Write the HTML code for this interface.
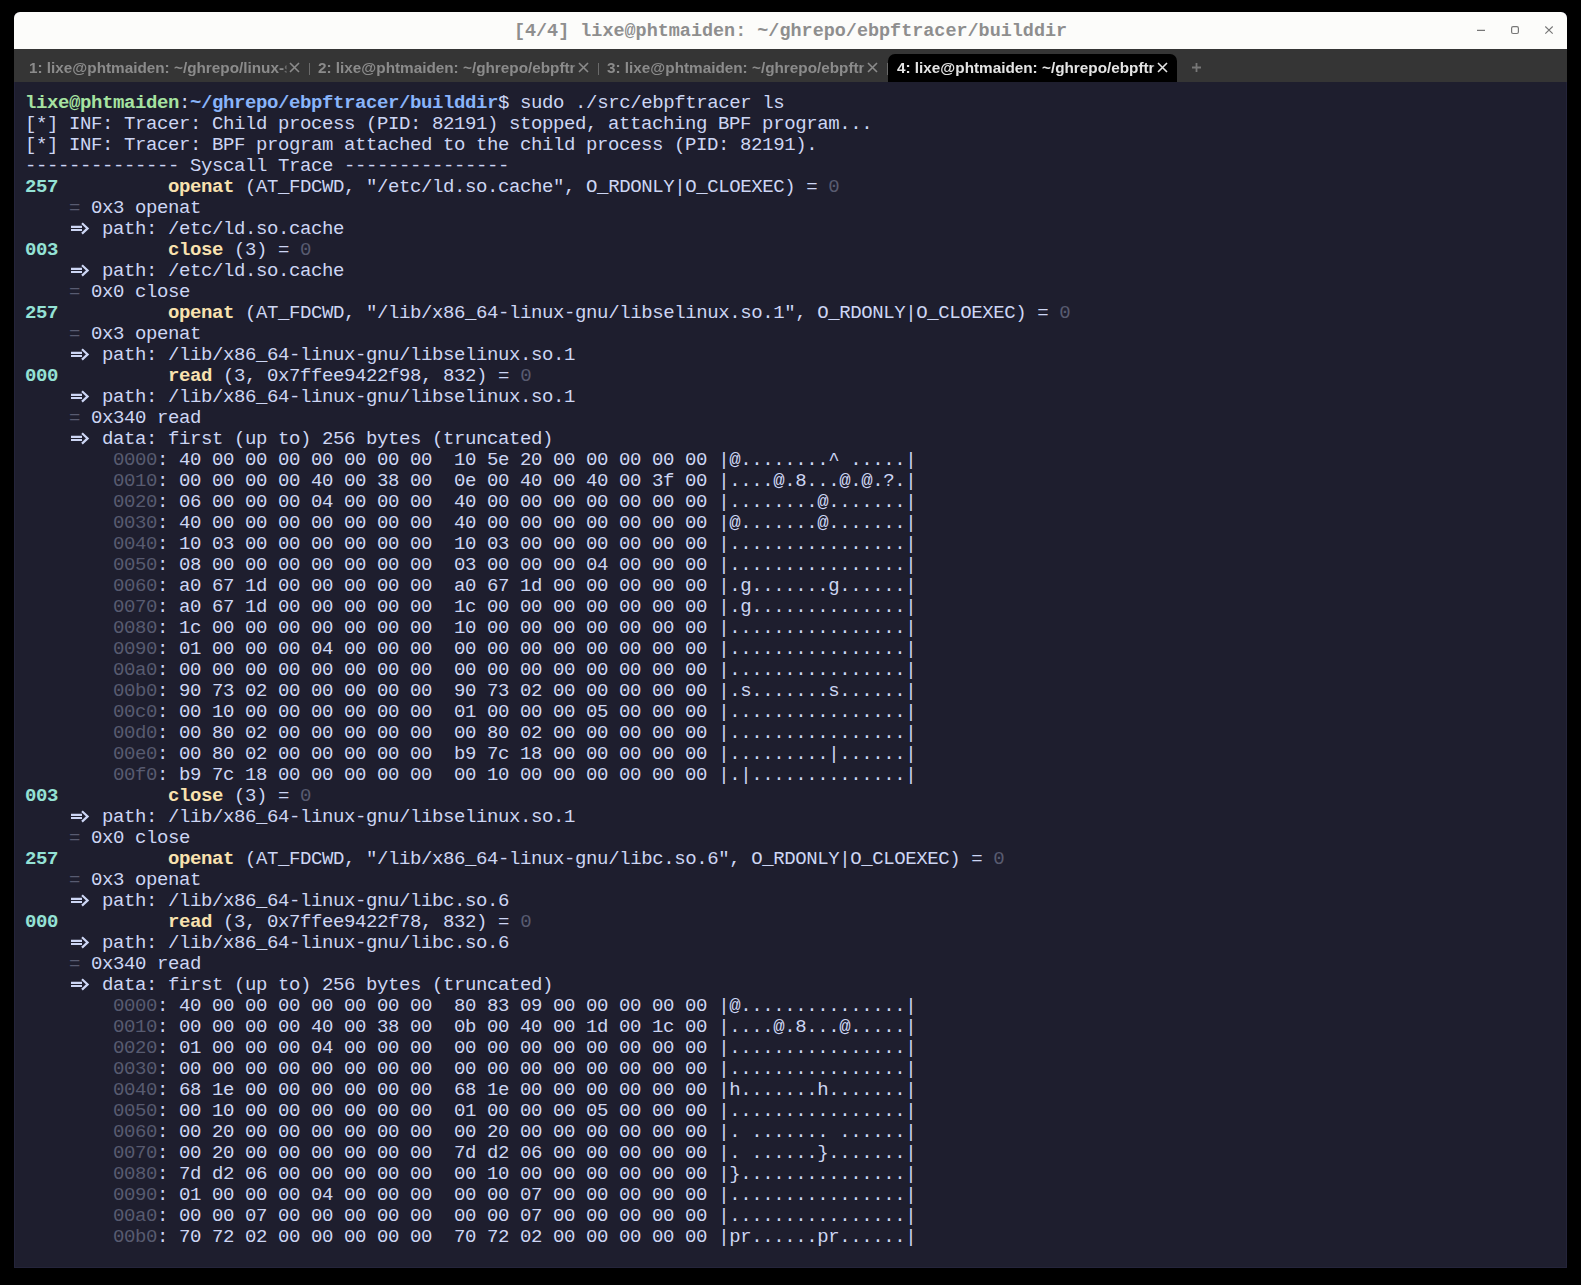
<!DOCTYPE html>
<html><head><meta charset="utf-8">
<style>
html,body{margin:0;padding:0;background:#000;width:1581px;height:1285px;overflow:hidden}
#win{position:absolute;left:14px;top:12px;width:1553px;height:1256px;background:#1e1e2e;border-radius:6px 6px 0 0;overflow:hidden;box-shadow:inset 1px -1px 0 #24243a,inset -1px 0 0 #24243a}
#title{position:absolute;left:0;top:0;width:1553px;height:37px;background:#fcfcfa}
#ttext{position:absolute;left:0;top:1px;width:1553px;height:37px;line-height:37px;text-align:center;font-family:"Liberation Mono",monospace;font-weight:bold;font-size:18.45px;color:#8e8e8e}
#tabs{position:absolute;left:0;top:37px;width:1553px;height:33px;background:#353535}
.tab{position:absolute;top:5px;height:28px;width:289px;font-family:"Liberation Sans",sans-serif;font-size:15.3px;font-weight:bold;color:#8b8b8b;overflow:hidden}
.tab .tt{position:absolute;left:9px;top:5px;white-space:nowrap;width:258px;overflow:hidden;-webkit-mask-image:linear-gradient(to right,#000 255px,transparent 259px)}
.tab svg{position:absolute;left:269px;top:8px}
.tab.act{background:#000;color:#e4e4e4;border-radius:7px 7px 0 0}
.sep{position:absolute;top:14px;width:1px;height:12px;background:#6a6a6a}
#term{position:absolute;left:11px;top:81px;font-family:"Liberation Mono",monospace;font-size:19px;letter-spacing:-0.4px;color:#cdd6f4}
.l{white-space:pre;height:21px;line-height:21px}
.pg{color:#a6e3a1;font-weight:bold}
.pb{color:#89b4fa;font-weight:bold}
.nt{color:#94e2d5;font-weight:bold}
.sy{color:#f9e2af;font-weight:bold}
.dm{color:#585b70}
.ar{display:inline-block;width:22px;height:21px;vertical-align:top;font-style:normal}
.ar svg{display:block}
</style></head><body>
<div id="win">
 <div id="title"><div id="ttext">[4/4] lixe@phtmaiden: ~/ghrepo/ebpftracer/builddir</div>
  <svg style="position:absolute;left:1460px;top:10px" width="93" height="17" viewBox="0 0 93 17">
   <path d="M3 8.4H11" stroke="#777" stroke-width="1.1"/>
   <rect x="37.6" y="4.7" width="6.8" height="6.8" rx="1.5" fill="none" stroke="#777" stroke-width="1.2"/>
   <path d="M71.3 4.5L78.7 11.7M78.7 4.5L71.3 11.7" stroke="#777" stroke-width="1.1"/>
  </svg>
 </div>
 <div id="tabs">
  <div class="tab" style="left:6px"><div class="tt">1: lixe@phtmaiden: ~/ghrepo/linux-sched</div><svg width="11" height="11" viewBox="0 0 11 11"><path d="M1 1L10 10M10 1L1 10" stroke="#8b8b8b" stroke-width="1.6"/></svg></div>
  <div class="sep" style="left:295px"></div>
  <div class="tab" style="left:295px"><div class="tt">2: lixe@phtmaiden: ~/ghrepo/ebpftracer</div><svg width="11" height="11" viewBox="0 0 11 11"><path d="M1 1L10 10M10 1L1 10" stroke="#8b8b8b" stroke-width="1.6"/></svg></div>
  <div class="sep" style="left:584px"></div>
  <div class="tab" style="left:584px"><div class="tt">3: lixe@phtmaiden: ~/ghrepo/ebpftracer</div><svg width="11" height="11" viewBox="0 0 11 11"><path d="M1 1L10 10M10 1L1 10" stroke="#8b8b8b" stroke-width="1.6"/></svg></div>
  <div class="sep" style="left:873px"></div>
  <div class="tab act" style="left:874px"><div class="tt">4: lixe@phtmaiden: ~/ghrepo/ebpftracer</div><svg width="11" height="11" viewBox="0 0 11 11"><path d="M1 1L10 10M10 1L1 10" stroke="#e4e4e4" stroke-width="1.6"/></svg></div>
  <svg style="position:absolute;left:1177px;top:13px" width="11" height="11" viewBox="0 0 11 11"><path d="M1 5.5H10M5.5 1V10" stroke="#777" stroke-width="1.8"/></svg>
 </div>
 <div id="term">
<div class="l"><span class="pg">lixe@phtmaiden</span>:<span class="pb">~/ghrepo/ebpftracer/builddir</span>$ sudo ./src/ebpftracer ls</div>
<div class="l">[*] INF: Tracer: Child process (PID: 82191) stopped, attaching BPF program...</div>
<div class="l">[*] INF: Tracer: BPF program attached to the child process (PID: 82191).</div>
<div class="l">-------------- Syscall Trace ---------------</div>
<div class="l"><span class="nt">257</span>          <span class="sy">openat</span> (AT_FDCWD, "/etc/ld.so.cache", O_RDONLY|O_CLOEXEC) = <span class="dm">0</span></div>
<div class="l">    <span class="dm">=</span> 0x3 openat</div>
<div class="l">    <i class="ar"><svg width="22" height="21" viewBox="0 0 22 21"><path d="M2 7.85H13M2 11H13" stroke="#cdd6f4" stroke-width="2.1" fill="none"/><path d="M13 4.2L18.6 9.4L13 14.6" stroke="#cdd6f4" stroke-width="2.2" fill="none" stroke-linejoin="miter"/></svg></i> path: /etc/ld.so.cache</div>
<div class="l"><span class="nt">003</span>          <span class="sy">close</span> (3) = <span class="dm">0</span></div>
<div class="l">    <i class="ar"><svg width="22" height="21" viewBox="0 0 22 21"><path d="M2 7.85H13M2 11H13" stroke="#cdd6f4" stroke-width="2.1" fill="none"/><path d="M13 4.2L18.6 9.4L13 14.6" stroke="#cdd6f4" stroke-width="2.2" fill="none" stroke-linejoin="miter"/></svg></i> path: /etc/ld.so.cache</div>
<div class="l">    <span class="dm">=</span> 0x0 close</div>
<div class="l"><span class="nt">257</span>          <span class="sy">openat</span> (AT_FDCWD, "/lib/x86_64-linux-gnu/libselinux.so.1", O_RDONLY|O_CLOEXEC) = <span class="dm">0</span></div>
<div class="l">    <span class="dm">=</span> 0x3 openat</div>
<div class="l">    <i class="ar"><svg width="22" height="21" viewBox="0 0 22 21"><path d="M2 7.85H13M2 11H13" stroke="#cdd6f4" stroke-width="2.1" fill="none"/><path d="M13 4.2L18.6 9.4L13 14.6" stroke="#cdd6f4" stroke-width="2.2" fill="none" stroke-linejoin="miter"/></svg></i> path: /lib/x86_64-linux-gnu/libselinux.so.1</div>
<div class="l"><span class="nt">000</span>          <span class="sy">read</span> (3, 0x7ffee9422f98, 832) = <span class="dm">0</span></div>
<div class="l">    <i class="ar"><svg width="22" height="21" viewBox="0 0 22 21"><path d="M2 7.85H13M2 11H13" stroke="#cdd6f4" stroke-width="2.1" fill="none"/><path d="M13 4.2L18.6 9.4L13 14.6" stroke="#cdd6f4" stroke-width="2.2" fill="none" stroke-linejoin="miter"/></svg></i> path: /lib/x86_64-linux-gnu/libselinux.so.1</div>
<div class="l">    <span class="dm">=</span> 0x340 read</div>
<div class="l">    <i class="ar"><svg width="22" height="21" viewBox="0 0 22 21"><path d="M2 7.85H13M2 11H13" stroke="#cdd6f4" stroke-width="2.1" fill="none"/><path d="M13 4.2L18.6 9.4L13 14.6" stroke="#cdd6f4" stroke-width="2.2" fill="none" stroke-linejoin="miter"/></svg></i> data: first (up to) 256 bytes (truncated)</div>
<div class="l">        <span class="dm">0000</span>: 40 00 00 00 00 00 00 00  10 5e 20 00 00 00 00 00 |@........^ .....|</div>
<div class="l">        <span class="dm">0010</span>: 00 00 00 00 40 00 38 00  0e 00 40 00 40 00 3f 00 |....@.8...@.@.?.|</div>
<div class="l">        <span class="dm">0020</span>: 06 00 00 00 04 00 00 00  40 00 00 00 00 00 00 00 |........@.......|</div>
<div class="l">        <span class="dm">0030</span>: 40 00 00 00 00 00 00 00  40 00 00 00 00 00 00 00 |@.......@.......|</div>
<div class="l">        <span class="dm">0040</span>: 10 03 00 00 00 00 00 00  10 03 00 00 00 00 00 00 |................|</div>
<div class="l">        <span class="dm">0050</span>: 08 00 00 00 00 00 00 00  03 00 00 00 04 00 00 00 |................|</div>
<div class="l">        <span class="dm">0060</span>: a0 67 1d 00 00 00 00 00  a0 67 1d 00 00 00 00 00 |.g.......g......|</div>
<div class="l">        <span class="dm">0070</span>: a0 67 1d 00 00 00 00 00  1c 00 00 00 00 00 00 00 |.g..............|</div>
<div class="l">        <span class="dm">0080</span>: 1c 00 00 00 00 00 00 00  10 00 00 00 00 00 00 00 |................|</div>
<div class="l">        <span class="dm">0090</span>: 01 00 00 00 04 00 00 00  00 00 00 00 00 00 00 00 |................|</div>
<div class="l">        <span class="dm">00a0</span>: 00 00 00 00 00 00 00 00  00 00 00 00 00 00 00 00 |................|</div>
<div class="l">        <span class="dm">00b0</span>: 90 73 02 00 00 00 00 00  90 73 02 00 00 00 00 00 |.s.......s......|</div>
<div class="l">        <span class="dm">00c0</span>: 00 10 00 00 00 00 00 00  01 00 00 00 05 00 00 00 |................|</div>
<div class="l">        <span class="dm">00d0</span>: 00 80 02 00 00 00 00 00  00 80 02 00 00 00 00 00 |................|</div>
<div class="l">        <span class="dm">00e0</span>: 00 80 02 00 00 00 00 00  b9 7c 18 00 00 00 00 00 |.........|......|</div>
<div class="l">        <span class="dm">00f0</span>: b9 7c 18 00 00 00 00 00  00 10 00 00 00 00 00 00 |.|..............|</div>
<div class="l"><span class="nt">003</span>          <span class="sy">close</span> (3) = <span class="dm">0</span></div>
<div class="l">    <i class="ar"><svg width="22" height="21" viewBox="0 0 22 21"><path d="M2 7.85H13M2 11H13" stroke="#cdd6f4" stroke-width="2.1" fill="none"/><path d="M13 4.2L18.6 9.4L13 14.6" stroke="#cdd6f4" stroke-width="2.2" fill="none" stroke-linejoin="miter"/></svg></i> path: /lib/x86_64-linux-gnu/libselinux.so.1</div>
<div class="l">    <span class="dm">=</span> 0x0 close</div>
<div class="l"><span class="nt">257</span>          <span class="sy">openat</span> (AT_FDCWD, "/lib/x86_64-linux-gnu/libc.so.6", O_RDONLY|O_CLOEXEC) = <span class="dm">0</span></div>
<div class="l">    <span class="dm">=</span> 0x3 openat</div>
<div class="l">    <i class="ar"><svg width="22" height="21" viewBox="0 0 22 21"><path d="M2 7.85H13M2 11H13" stroke="#cdd6f4" stroke-width="2.1" fill="none"/><path d="M13 4.2L18.6 9.4L13 14.6" stroke="#cdd6f4" stroke-width="2.2" fill="none" stroke-linejoin="miter"/></svg></i> path: /lib/x86_64-linux-gnu/libc.so.6</div>
<div class="l"><span class="nt">000</span>          <span class="sy">read</span> (3, 0x7ffee9422f78, 832) = <span class="dm">0</span></div>
<div class="l">    <i class="ar"><svg width="22" height="21" viewBox="0 0 22 21"><path d="M2 7.85H13M2 11H13" stroke="#cdd6f4" stroke-width="2.1" fill="none"/><path d="M13 4.2L18.6 9.4L13 14.6" stroke="#cdd6f4" stroke-width="2.2" fill="none" stroke-linejoin="miter"/></svg></i> path: /lib/x86_64-linux-gnu/libc.so.6</div>
<div class="l">    <span class="dm">=</span> 0x340 read</div>
<div class="l">    <i class="ar"><svg width="22" height="21" viewBox="0 0 22 21"><path d="M2 7.85H13M2 11H13" stroke="#cdd6f4" stroke-width="2.1" fill="none"/><path d="M13 4.2L18.6 9.4L13 14.6" stroke="#cdd6f4" stroke-width="2.2" fill="none" stroke-linejoin="miter"/></svg></i> data: first (up to) 256 bytes (truncated)</div>
<div class="l">        <span class="dm">0000</span>: 40 00 00 00 00 00 00 00  80 83 09 00 00 00 00 00 |@...............|</div>
<div class="l">        <span class="dm">0010</span>: 00 00 00 00 40 00 38 00  0b 00 40 00 1d 00 1c 00 |....@.8...@.....|</div>
<div class="l">        <span class="dm">0020</span>: 01 00 00 00 04 00 00 00  00 00 00 00 00 00 00 00 |................|</div>
<div class="l">        <span class="dm">0030</span>: 00 00 00 00 00 00 00 00  00 00 00 00 00 00 00 00 |................|</div>
<div class="l">        <span class="dm">0040</span>: 68 1e 00 00 00 00 00 00  68 1e 00 00 00 00 00 00 |h.......h.......|</div>
<div class="l">        <span class="dm">0050</span>: 00 10 00 00 00 00 00 00  01 00 00 00 05 00 00 00 |................|</div>
<div class="l">        <span class="dm">0060</span>: 00 20 00 00 00 00 00 00  00 20 00 00 00 00 00 00 |. ....... ......|</div>
<div class="l">        <span class="dm">0070</span>: 00 20 00 00 00 00 00 00  7d d2 06 00 00 00 00 00 |. ......}.......|</div>
<div class="l">        <span class="dm">0080</span>: 7d d2 06 00 00 00 00 00  00 10 00 00 00 00 00 00 |}...............|</div>
<div class="l">        <span class="dm">0090</span>: 01 00 00 00 04 00 00 00  00 00 07 00 00 00 00 00 |................|</div>
<div class="l">        <span class="dm">00a0</span>: 00 00 07 00 00 00 00 00  00 00 07 00 00 00 00 00 |................|</div>
<div class="l">        <span class="dm">00b0</span>: 70 72 02 00 00 00 00 00  70 72 02 00 00 00 00 00 |pr......pr......|</div>
 </div>
</div>
</body></html>
